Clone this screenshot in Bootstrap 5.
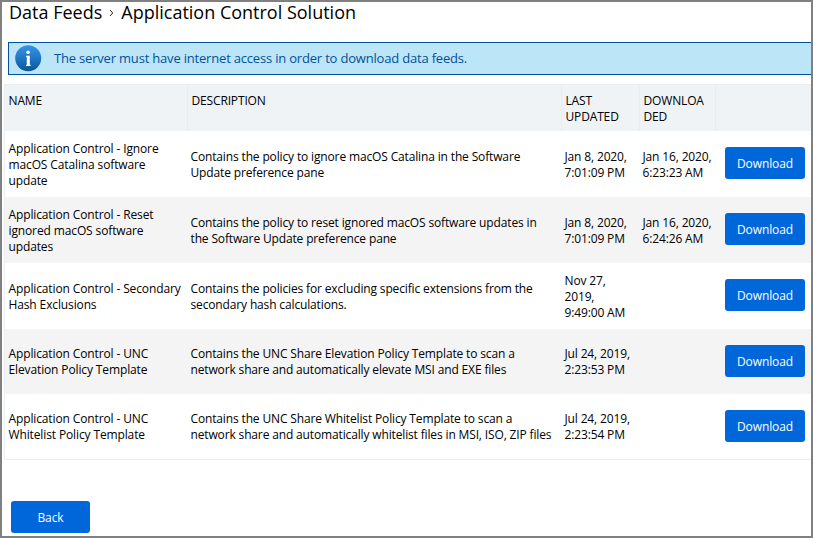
<!DOCTYPE html>
<html lang="en">
<head>
<meta charset="utf-8">
<meta name="viewport" content="width=device-width, initial-scale=1">
<title>Data Feeds</title>
<link href="https://cdn.jsdelivr.net/npm/bootstrap@5.3.0/dist/css/bootstrap.min.css" rel="stylesheet">
<style>
body { font-family: "Open Sans", "Noto Sans", sans-serif; font-size: 12px; line-height: 16px; color: #000; }
.frame { height: 538px; border: 2px solid #808080; overflow: hidden; background: #fff; }
.page-title { font-size: 18px; line-height: 24px; padding-left: 7px; margin-top: -2px; height: 42px; }
.crumb-sep { width: 5px; height: 8px; margin: 1px 7px 0 7px; }
.notice { height: 33px; margin-left: 6px; padding: 0 0 0 6px; border: 1px solid #00529b; border-right: 0; border-radius: 0; background: #bde5f8; color: #00529b; font-size: 13px; letter-spacing: -.19px; }
.notice svg { margin-right: 12px; }
.notice span { padding-bottom: 2px; }
.feeds { width: 807px; margin: 9px 0 0 2px; table-layout: fixed; border: 1px solid #eaeef1; border-right: 0; border-collapse: separate; border-spacing: 0; color: #000; }
.feeds th { height: 46px; padding: 8px 3.5px 0; background: #eff3f6; border: 0; border-right: 1px solid #e8edf1; font-weight: 400; letter-spacing: -.15px; vertical-align: top; }
.feeds th:last-child { border-right: 0; }
.feeds td { height: 66px; padding: 2px 0 0 2.5px; border: 0; vertical-align: middle; white-space: nowrap; background: #fff; color: #000; letter-spacing: -.145px; }
.feeds td:first-child { padding-left: 3.5px; letter-spacing: -.125px; }
.feeds tr.short td { height: 65px; padding-top: 0; }
.feeds tr.alt td { background: #f4f4f4; }
.feeds tr td:last-child { padding: 0 0 2px 9px; }
.btn-feed { height: 32px; padding: 1px 0 0; border: 0; border-radius: 3px; background: #0067db; color: #fff; font-size: 12px; line-height: 31px; letter-spacing: -.1px; }
.btn-row { width: 80px; }
.btn-back { width: 79px; margin: 41px 0 0 9px; }
</style>
<script src="https://cdn.jsdelivr.net/npm/bootstrap@5.3.0/dist/js/bootstrap.bundle.min.js"></script>
</head>
<body>
<main class="frame">
  <h1 class="page-title d-flex align-items-start fw-normal mb-0"><span>Data Feeds</span><svg class="crumb-sep align-self-start mt-2" viewBox="0 0 5 8" fill="none" stroke="#222"><path d="M1 2l2.7 3L1 8"/></svg><span>Application Control Solution</span></h1>
  <div class="notice alert d-flex align-items-center mb-0" role="alert">
    <svg width="27" height="27" viewBox="0 0 27 27" aria-hidden="true">
      <defs><linearGradient id="info" x1="0" y1="0" x2="0" y2="1"><stop offset="0" stop-color="#3594e8"/><stop offset=".5" stop-color="#2077c4"/><stop offset="1" stop-color="#095793"/></linearGradient></defs>
      <circle cx="13.2" cy="13.2" r="13" fill="url(#info)"/>
      <circle cx="13.1" cy="7.2" r="1.8" fill="#fff"/>
      <path d="M11.2 10.8h3.6v9h.8v1.2h-4.6v-1.2h.8v-7.8h-.6z" fill="#fff"/>
    </svg>
    <span>The server must have internet access in order to download data feeds.</span>
  </div>
  <table class="feeds table mb-0">
    <colgroup><col style="width:183px"><col style="width:374px"><col style="width:78px"><col style="width:76px"><col></colgroup>
    <thead><tr><th>NAME</th><th>DESCRIPTION</th><th>LAST<br>UPDATED</th><th>DOWNLOA<br>DED</th><th></th></tr></thead>
    <tbody>
      <tr><td>Application Control - Ignore<br>macOS Catalina software<br>update</td><td>Contains the policy to ignore macOS Catalina in the Software<br>Update preference pane</td><td>Jan 8, 2020,<br>7:01:09 PM</td><td>Jan 16, 2020,<br>6:23:23 AM</td><td><button class="btn btn-primary btn-feed btn-row">Download</button></td></tr>
      <tr class="alt"><td>Application Control - Reset<br>ignored macOS software<br>updates</td><td>Contains the policy to reset ignored macOS software updates in<br>the Software Update preference pane</td><td>Jan 8, 2020,<br>7:01:09 PM</td><td>Jan 16, 2020,<br>6:24:26 AM</td><td><button class="btn btn-primary btn-feed btn-row">Download</button></td></tr>
      <tr><td>Application Control - Secondary<br>Hash Exclusions</td><td>Contains the policies for excluding specific extensions from the<br>secondary hash calculations.</td><td>Nov 27,<br>2019,<br>9:49:00 AM</td><td></td><td><button class="btn btn-primary btn-feed btn-row">Download</button></td></tr>
      <tr class="alt short"><td>Application Control - UNC<br>Elevation Policy Template</td><td>Contains the UNC Share Elevation Policy Template to scan a<br>network share and automatically elevate MSI and EXE files</td><td>Jul 24, 2019,<br>2:23:53 PM</td><td></td><td><button class="btn btn-primary btn-feed btn-row">Download</button></td></tr>
      <tr class="short"><td>Application Control - UNC<br>Whitelist Policy Template</td><td>Contains the UNC Share Whitelist Policy Template to scan a<br>network share and automatically whitelist files in MSI, ISO, ZIP files</td><td>Jul 24, 2019,<br>2:23:54 PM</td><td></td><td><button class="btn btn-primary btn-feed btn-row">Download</button></td></tr>
    </tbody>
  </table>
  <button class="btn btn-primary btn-feed btn-back">Back</button>
</main>
</body>
</html>
